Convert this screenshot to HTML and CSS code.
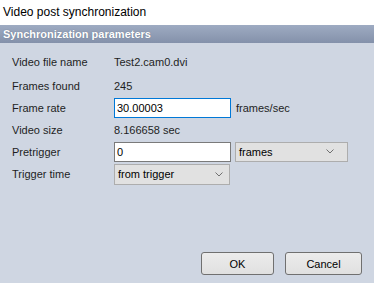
FILE: index.html
```html
<!DOCTYPE html>
<html>
<head>
    <title>Video post synchronization</title>
    <link rel="stylesheet" href="styles.css">
</head>
<body>
    <div id="dialog">
        <div id="title">Video post synchronization</div>
        <div id="group-header">Synchronization parameters</div>
        <div id="params">
            <div class="row row-text">
                <span class="label">Video file name</span>
                <span class="value">Test2.cam0.dvi</span>
            </div>
            <div class="row row-text">
                <span class="label">Frames found</span>
                <span class="value">245</span>
            </div>
            <div class="row row-rate">
                <span class="label">Frame rate</span>
                <input type="text" class="field focused" value="30.00003">
                <span class="unit">frames/sec</span>
            </div>
            <div class="row row-size">
                <span class="label">Video size</span>
                <span class="value">8.166658 sec</span>
            </div>
            <div class="row row-pre">
                <span class="label">Pretrigger</span>
                <input type="text" class="field" value="0">
                <div class="combo combo-units">
                    <span>frames</span>
                    <svg width="8" height="5" viewBox="0 0 8 5"><path d="M0.5 0.5 L4 4 L7.5 0.5" fill="none" stroke="#707070" stroke-width="1"/></svg>
                </div>
            </div>
            <div class="row row-trig">
                <span class="label">Trigger time</span>
                <div class="combo combo-trigger">
                    <span>from trigger</span>
                    <svg width="8" height="5" viewBox="0 0 8 5"><path d="M0.5 0.5 L4 4 L7.5 0.5" fill="none" stroke="#707070" stroke-width="1"/></svg>
                </div>
            </div>
        </div>
        <div id="buttons">
            <button class="btn btn-ok">OK</button>
            <button class="btn btn-cancel">Cancel</button>
        </div>
    </div>
</body>
</html>
```

FILE: styles.css
```css
body {
    margin: 0;
    font-family: "Liberation Sans", Arial, sans-serif;
    font-size: 11px;
    color: #1e1e1e;
}
#dialog {
    width: 374px;
    height: 283px;
    display: flex;
    flex-direction: column;
    background-color: #cfd6e2;
}
#title {
    height: 25px;
    line-height: 24px;
    padding-left: 3px;
    font-size: 12px;
    color: #000;
    background-color: #fff;
}
#group-header {
    height: 18px;
    line-height: 18px;
    padding-left: 3px;
    font-weight: bold;
    color: #fff;
    text-shadow: 0 0 1px #5f6b80;
    background: linear-gradient(#9eabc2, #8491aa);
}
#params {
    padding: 7px 0 0 12px;
}
#params .row {
    display: flex;
    align-items: center;
}
#params .label {
    width: 102px;
}
#params .row-text {
    height: 24px;
}
#params .row-rate {
    height: 20px;
}
#params .row-size {
    height: 23px;
}
#params .row-pre {
    height: 21px;
}
#params .row-trig {
    height: 22px;
    margin-top: 1px;
}
#params .field {
    box-sizing: border-box;
    width: 117px;
    height: 20px;
    margin: 0;
    padding: 0 2px;
    border: 1px solid #7a7a7a;
    background-color: #fff;
    font-family: "Liberation Sans", Arial, sans-serif;
    font-size: 11px;
    color: #000;
    outline: none;
}
#params .field.focused {
    border-color: #0078d7;
}
#params .unit {
    margin-left: 5px;
}
#params .combo {
    box-sizing: border-box;
    display: flex;
    align-items: center;
    justify-content: space-between;
    height: 20px;
    padding: 0 6px 0 3px;
    border: 1px solid #adadad;
    background-color: #e1e1e1;
    color: #000;
}
#params .combo-units {
    width: 113px;
    margin-left: 4px;
    padding-right: 13px;
}
#params .combo-trigger {
    width: 116px;
    height: 21px;
}
#buttons {
    margin-top: auto;
    display: flex;
    justify-content: flex-end;
    gap: 11px;
    padding: 0 12px 8px 0;
}
#buttons .btn {
    height: 23px;
    border: 1px solid #707070;
    border-radius: 3px;
    background: linear-gradient(#ececec, #e0e0e0);
    font-family: "Liberation Sans", Arial, sans-serif;
    font-size: 11px;
    color: #000;
    padding: 0;
}
#buttons .btn-ok {
    width: 73px;
}
#buttons .btn-cancel {
    width: 77px;
}
```
